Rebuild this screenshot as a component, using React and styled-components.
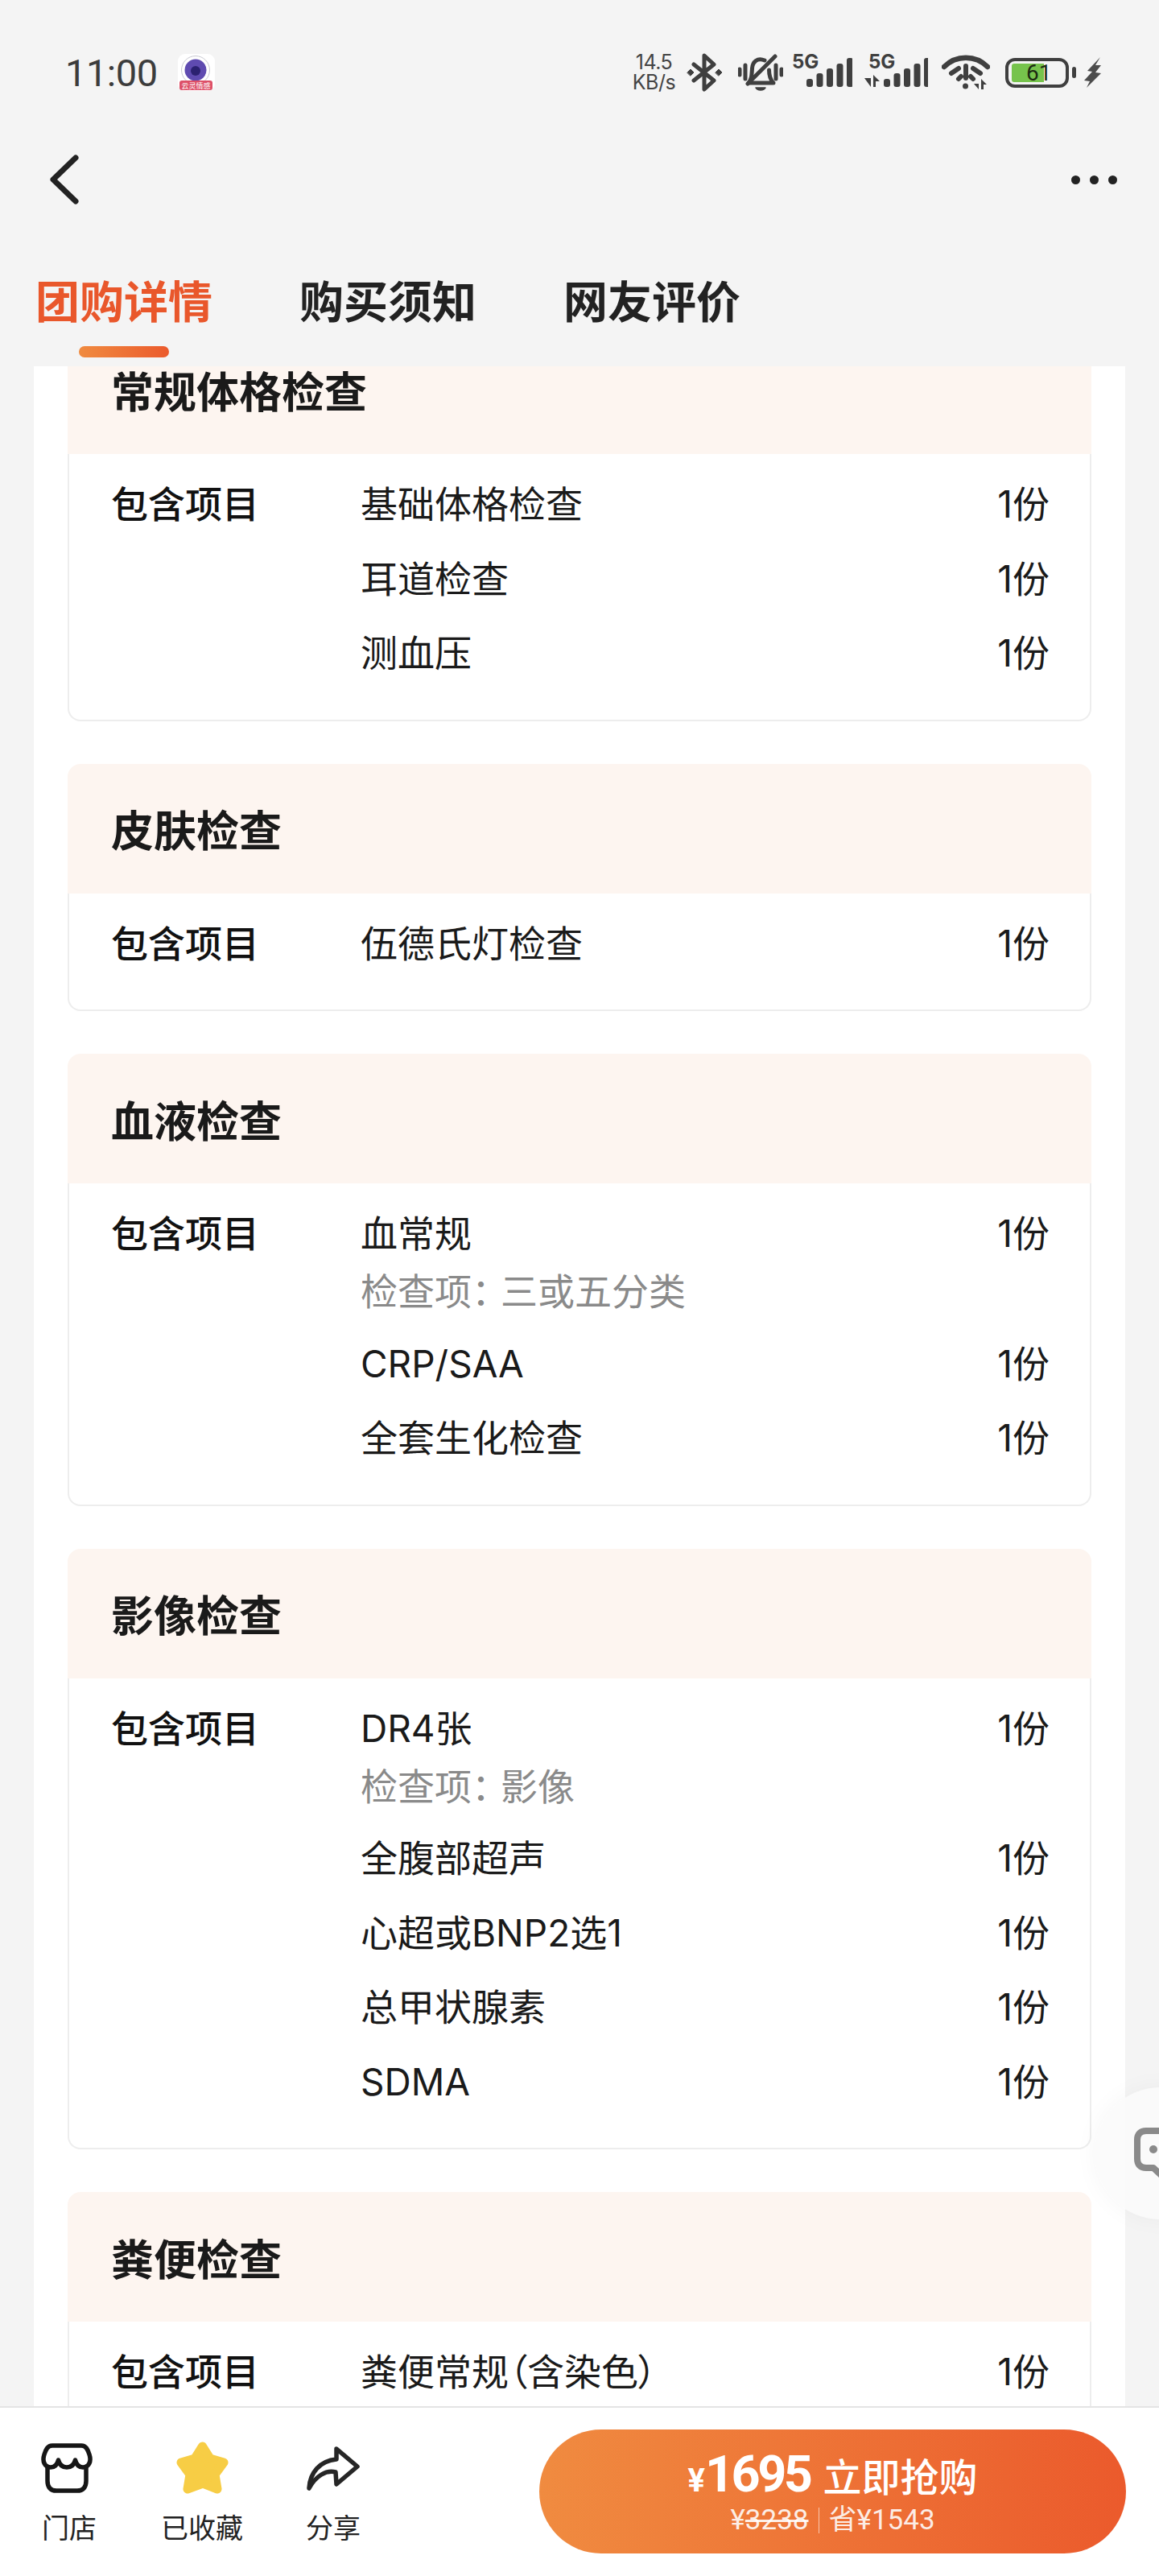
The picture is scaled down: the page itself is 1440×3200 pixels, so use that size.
import React from "react";
import styled, { createGlobalStyle } from "styled-components";

const SANS = `Inter, "Noto Sans CJK SC", sans-serif`;

const GROUPS = [
  {
    title: "常规体格检查",
    items: [{ name: "基础体格检查" }, { name: "耳道检查" }, { name: "测血压" }],
  },
  { title: "皮肤检查", items: [{ name: "伍德氏灯检查" }] },
  {
    title: "血液检查",
    items: [
      { name: "血常规", sub: "三或五分类" },
      { name: "CRP/SAA" },
      { name: "全套生化检查" },
    ],
  },
  {
    title: "影像检查",
    items: [
      { name: "DR4张", sub: "影像" },
      { name: "全腹部超声" },
      { name: "心超或BNP2选1" },
      { name: "总甲状腺素" },
      { name: "SDMA" },
    ],
  },
  { title: "粪便检查", items: [{ name: "粪便常规（含染色）" }] },
];

const GlobalStyle = createGlobalStyle`
  html, body {
    margin: 0;
    padding: 0;
    background: #f4f4f4;
    font-family: ${SANS};
  }
`;

const Page = styled.div`
  position: relative;
  width: 1440px;
  height: 3200px;
  display: flex;
  flex-direction: column;
  overflow: hidden;
  background: #f4f4f4;
`;

const StatusBar = styled.div`
  height: 180px;
  flex: none;
  display: flex;
  align-items: center;
  justify-content: space-between;
  padding: 0 72px 0 81px;
  color: #3c3c3c;
`;

const StatusLeft = styled.div`
  display: flex;
  align-items: center;
  gap: 25px;
`;

const Clock = styled.span`
  font-family: Roboto, sans-serif;
  font-size: 47px;
  letter-spacing: -0.5px;
`;

const StatusRight = styled.div`
  display: flex;
  align-items: center;
`;

const Slot = styled.div`
  display: flex;
  margin-left: ${(p) => p.$gap || 0}px;
`;

const NetSpeed = styled.div`
  width: 55px;
  font-family: Inter, sans-serif;
  font-size: 25px;
  line-height: 25px;
  text-align: center;
  letter-spacing: -0.5px;
  color: #444;
`;

const Battery = styled.div`
  position: relative;
  box-sizing: border-box;
  width: 79px;
  height: 37px;
  border: 4px solid #3f3f3f;
  border-radius: 12px;
  padding: 3px 4px;
`;

const BatteryFill = styled.div`
  width: 40px;
  height: 100%;
  background: #76c34c;
  border-radius: 3px 0 0 3px;
`;

const BatteryText = styled.span`
  position: absolute;
  top: 0;
  left: 22px;
  font-family: Roboto, sans-serif;
  font-size: 28px;
  line-height: 29px;
  color: #1c2a12;
`;

const BatteryNub = styled.div`
  width: 5px;
  height: 14px;
  border-radius: 3px;
  background: #3f3f3f;
  margin: 0 0 0 4px;
  align-self: center;
`;

const NavBar = styled.div`
  height: 86px;
  flex: none;
  display: flex;
  align-items: center;
  justify-content: space-between;
  padding: 0 52px 0 62px;
`;

const MoreDots = styled.div`
  display: flex;
  gap: 12px;
`;

const Dot = styled.span`
  width: 11px;
  height: 11px;
  border-radius: 50%;
  background: #222;
`;

const TabBar = styled.div`
  height: 189px;
  flex: none;
  box-sizing: border-box;
  display: flex;
  gap: 108px;
  padding: 84px 0 0 44px;
`;

const Tab = styled.div`
  display: flex;
  flex-direction: column;
  align-items: center;
  font-size: 55px;
  line-height: 50px;
  font-weight: 700;
  color: ${(p) => (p.$active ? "#e9572b" : "#222")};
`;

const TabLine = styled.span`
  width: 112px;
  height: 14px;
  margin-top: 30px;
  border-radius: 7px;
  background: ${(p) =>
    p.$active ? "linear-gradient(90deg, #f08b40, #eb5a2c)" : "transparent"};
`;

const Scroller = styled.div`
  flex: 1;
  min-height: 0;
  overflow: hidden;
  margin: 0 42px;
  background: #fff;
`;

const CardList = styled.div`
  display: flex;
  flex-direction: column;
  gap: 53px;
  margin-top: -52px;
  padding: 0 42px;
`;

const Card = styled.section`
  border-radius: 16px;
`;

const CardTitle = styled.h3`
  margin: 0;
  height: 161px;
  display: flex;
  align-items: center;
  padding: 0 54px;
  border-radius: 16px 16px 0 0;
  background: #fdf5f0;
  font-size: 53px;
  font-weight: 600;
  color: #1a1a1a;
`;

const CardBody = styled.div`
  display: grid;
  grid-template-columns: 310px 1fr;
  padding: 16px 50px 36px 52px;
  border: 2px solid #ededed;
  border-top: none;
  border-radius: 0 0 16px 16px;
`;

const RowLabel = styled.div`
  padding-top: 23px;
  font-size: 46px;
  line-height: 46px;
  font-weight: 500;
  color: #111;
`;

const Items = styled.div`
  display: flex;
  flex-direction: column;
`;

const ItemRow = styled.div`
  display: grid;
  grid-template-columns: 1fr auto;
  padding: 23px 0 23.5px;
  font-size: 46px;
  line-height: 46px;
  color: #1a1a1a;
`;

const ItemName = styled.span`
  font-feature-settings: "palt";
`;

const ItemSub = styled.div`
  grid-column: 1 / 3;
  margin: 26px 0 -3px;
  color: #8a8a8a;
`;

const SubColon = styled.span`
  letter-spacing: -10px;
`;

const BottomBar = styled.div`
  height: 211px;
  flex: none;
  box-sizing: border-box;
  display: flex;
  align-items: flex-start;
  justify-content: space-between;
  border-top: 2px solid #e4e4e4;
  background: #fff;
  padding: 27px 41px 0 50px;
`;

const Actions = styled.div`
  display: flex;
  gap: 78px;
`;

const Action = styled.div`
  display: flex;
  flex-direction: column;
  align-items: center;
  font-size: 34px;
  line-height: 36px;
  color: #222;
`;

const ActionIcon = styled.div`
  height: 66px;
  margin-top: 15px;
  margin-bottom: 24px;
  display: flex;
  align-items: center;
`;

const BuyButton = styled.div`
  width: 729px;
  height: 154px;
  flex: none;
  border-radius: 77px;
  background: linear-gradient(90deg, #f08b40, #eb5a2c);
  color: #fff;
  display: flex;
  flex-direction: column;
  align-items: center;
  justify-content: center;
`;

const BuyMain = styled.div`
  display: flex;
  align-items: baseline;
  height: 70px;
  font-weight: 500;
  font-size: 48px;
  line-height: 70px;
`;

const Yen = styled.span`
  font-family: Roboto, sans-serif;
  font-weight: 700;
  font-size: 40px;
`;

const Price = styled.span`
  font-family: Roboto, sans-serif;
  font-weight: 700;
  font-size: 63px;
  letter-spacing: -3.5px;
  margin-right: 16px;
`;

const BuySub = styled.div`
  display: flex;
  align-items: center;
  margin-top: 2px;
  font-family: Roboto, "Noto Sans CJK SC", sans-serif;
  font-size: 35px;
  line-height: 40px;
  color: rgba(255, 255, 255, 0.88);
`;

const OldPrice = styled.span`
  text-decoration: line-through;
`;

const Divider = styled.span`
  width: 1px;
  height: 32px;
  margin: 0 12px;
  background: rgba(255, 255, 255, 0.6);
`;

const ChatBubble = styled.div`
  position: absolute;
  left: 1360px;
  top: 2593px;
  width: 164px;
  height: 164px;
  border-radius: 50%;
  background: rgba(250, 250, 250, 0.85);
  box-shadow: 0 0 30px rgba(0, 0, 0, 0.04);
  padding: 50px 0 0 48px;
  box-sizing: border-box;
`;

const AppIcon = () => (
  <svg width="46" height="46" viewBox="0 0 46 46">
    <rect width="46" height="46" rx="9" fill="#fff" />
    <circle cx="22" cy="20" r="17.5" fill="#fff" stroke="#c9c9d2" />
    <circle cx="22" cy="20" r="13.5" fill="#5f4bb0" />
    <circle cx="22" cy="21" r="6" fill="#2b2170" />
    <rect x="2" y="33" width="41" height="12" rx="3" fill="#dd5068" />
    <text x="22.5" y="42.5" fontSize="9" fill="#fff" textAnchor="middle" fontFamily="Noto Sans CJK SC">
      云灵情感
    </text>
  </svg>
);

const Bluetooth = () => (
  <svg width="45" height="48" viewBox="0 0 45 48" fill="none" stroke="#3f3f3f" strokeWidth="5" strokeLinejoin="round" strokeLinecap="round">
    <path d="M9 14 L34 34 L22 45 V3 L34 14 L9 34" />
    <path d="M1 24 L5 20 L9 24 L5 28 Z M36 24 L40 20 L44 24 L40 28 Z" fill="#3f3f3f" strokeWidth="1" />
  </svg>
);

const BellOff = () => (
  <svg width="56" height="47" viewBox="0 0 56 47" fill="none" stroke="#3f3f3f" strokeWidth="5" strokeLinecap="round" strokeLinejoin="round">
    <path d="M13 36 H44 C40 32 38.5 28 38.5 20 M33 8 C24 4 18 10 17.5 18 C17 26 17 31 13 36" />
    <path d="M12 37 L46 3" />
    <path d="M2 19 V26 M9 14 V31 M47 14 V31 M54 19 V26" />
    <path d="M22 42 H34 C32 46 24 46 22 42 Z" fill="#3f3f3f" strokeWidth="1.5" />
  </svg>
);

const SignalBars = ({ x0, step }) => (
  <g fill="#3f3f3f">
    {[10, 17, 23, 29, 36].map((h, i) => (
      <rect key={h} x={x0 + i * step} y={40 - h} width="8" height={h} rx="3" />
    ))}
  </g>
);

const Signal = () => (
  <svg width="75" height="56" viewBox="0 -6 75 56">
    <text x="0" y="17" fontSize="24" fontWeight="700" fontFamily="Inter" fill="#3f3f3f">5G</text>
    <SignalBars x0={18} step={12.5} />
  </svg>
);

const SignalData = () => (
  <svg width="79" height="56" viewBox="0 -6 79 56">
    <text x="5" y="17" fontSize="24" fontWeight="700" fontFamily="Inter" fill="#3f3f3f">5G</text>
    <path d="M0 29 H8 V40 Z M11 25 L19 33 H14 V40 H11 Z" fill="#3f3f3f" />
    <SignalBars x0={24} step={12.5} />
  </svg>
);

const Wifi = () => (
  <svg width="60" height="44" viewBox="0 0 60 44" fill="none" stroke="#3f3f3f" strokeLinecap="round">
    <path d="M3 15 C18 0 42 0 57 15" strokeWidth="6.5" />
    <path d="M12 23 L21 17 M39 17 L48 23 M21 30 L24 27 M36 27 L39 30" strokeWidth="6" />
    <path d="M30 14 V29" strokeWidth="6" />
    <circle cx="29.5" cy="39" r="3.5" fill="#3f3f3f" stroke="none" />
    <path d="M40 36 H46 V43 Z M49 30 L56 37 H52 V43 H49 Z" fill="#3f3f3f" stroke="none" />
  </svg>
);

const Bolt = () => (
  <svg width="21" height="38" viewBox="0 0 21 38">
    <path d="M20 0 L4 17 L10 18 L0 29 L7 30 L3 38 L21 20 L14 19 L21 10 L14 10 Z" fill="#4c4c4c" />
  </svg>
);

const BackIcon = () => (
  <svg width="36" height="62" viewBox="0 0 36 62" fill="none" stroke="#222" strokeWidth="7" strokeLinecap="round" strokeLinejoin="round">
    <path d="M32 4 L4 31 L32 58" />
  </svg>
);

const StoreIcon = () => (
  <svg width="72" height="62" viewBox="0 0 72 62" fill="none" stroke="#161616" strokeWidth="5.5" strokeLinejoin="round">
    <path d="M15 3 H51 C57 3 59 8 61 14 C64 23 60 30 53 30 C48 30 45 27 43.5 21 C42 27 38 30 33 30 C28 30 24 27 22.5 21 C21 27 18 30 13 30 C6 30 2 23 5 14 C7 8 9 3 15 3 Z" />
    <path d="M9 29 V47 C9 55 13 59 20 59 H46 C53 59 57 55 57 47 V29" />
  </svg>
);

const StarIcon = () => (
  <svg width="67" height="66" viewBox="0 0 67 66">
    <path d="M33.5 6 L43 21 L60 26 L49 41 L52 59 L34 52 L15 59 L18 41 L7 26 L24 21 Z" fill="#f7cd45" stroke="#f7cd45" strokeWidth="11" strokeLinejoin="round" />
  </svg>
);

const ShareIcon = () => (
  <svg width="66" height="56" viewBox="0 0 66 56" fill="none" stroke="#262626" strokeWidth="5.5" strokeLinejoin="round" strokeLinecap="round">
    <path d="M3 53 C4 34 16 19 37 17 V4 L63 26 L37 48 L36 33 C24 30 11 38 3 53 Z" />
  </svg>
);

const ChatIcon = () => (
  <svg width="60" height="66" viewBox="0 0 60 66" fill="none" stroke="#8a8a8a" strokeWidth="8" strokeLinejoin="round">
    <path d="M60 4 H16 C9 4 5 8 5 15 V39 C5 46 9 50 16 50 H25 L38 62" />
    <circle cx="25" cy="27" r="5" fill="#8a8a8a" stroke="none" />
    <circle cx="46" cy="27" r="5" fill="#8a8a8a" stroke="none" />
  </svg>
);

const App = () => {
  return (
    <Page>
      <GlobalStyle />
      <StatusBar>
        <StatusLeft>
          <Clock>11:00</Clock>
          <AppIcon />
        </StatusLeft>
        <StatusRight>
          <NetSpeed>14.5<br />KB/s</NetSpeed>
          <Slot $gap={13}><Bluetooth /></Slot>
          <Slot $gap={19}><BellOff /></Slot>
          <Slot $gap={11}><Signal /></Slot>
          <Slot $gap={15}><SignalData /></Slot>
          <Slot $gap={17}><Wifi /></Slot>
          <Slot $gap={19}>
            <Battery>
              <BatteryFill />
              <BatteryText>61</BatteryText>
            </Battery>
            <BatteryNub />
          </Slot>
          <Slot $gap={10}><Bolt /></Slot>
        </StatusRight>
      </StatusBar>

      <NavBar>
        <BackIcon />
        <MoreDots>
          <Dot />
          <Dot />
          <Dot />
        </MoreDots>
      </NavBar>

      <TabBar>
        <Tab $active>
          团购详情
          <TabLine $active />
        </Tab>
        <Tab>
          购买须知
          <TabLine />
        </Tab>
        <Tab>
          网友评价
          <TabLine />
        </Tab>
      </TabBar>

      <Scroller>
        <CardList>
          {GROUPS.map((group) => (
            <Card key={group.title}>
              <CardTitle>{group.title}</CardTitle>
              <CardBody>
                <RowLabel>包含项目</RowLabel>
                <Items>
                  {group.items.map((item) => (
                    <ItemRow key={item.name}>
                      <ItemName>{item.name}</ItemName>
                      <span>1份</span>
                      {item.sub && (
                        <ItemSub>
                          检查项<SubColon>：</SubColon>
                          {item.sub}
                        </ItemSub>
                      )}
                    </ItemRow>
                  ))}
                </Items>
              </CardBody>
            </Card>
          ))}
        </CardList>
      </Scroller>

      <ChatBubble>
        <ChatIcon />
      </ChatBubble>

      <BottomBar>
        <Actions>
          <Action>
            <ActionIcon><StoreIcon /></ActionIcon>
            门店
          </Action>
          <Action>
            <ActionIcon><StarIcon /></ActionIcon>
            已收藏
          </Action>
          <Action>
            <ActionIcon><ShareIcon /></ActionIcon>
            分享
          </Action>
        </Actions>
        <BuyButton>
          <BuyMain>
            <Yen>¥</Yen>
            <Price>1695</Price>
            立即抢购
          </BuyMain>
          <BuySub>
            ¥<OldPrice>3238</OldPrice>
            <Divider />
            省¥1543
          </BuySub>
        </BuyButton>
      </BottomBar>
    </Page>
  );
};

export default App;
